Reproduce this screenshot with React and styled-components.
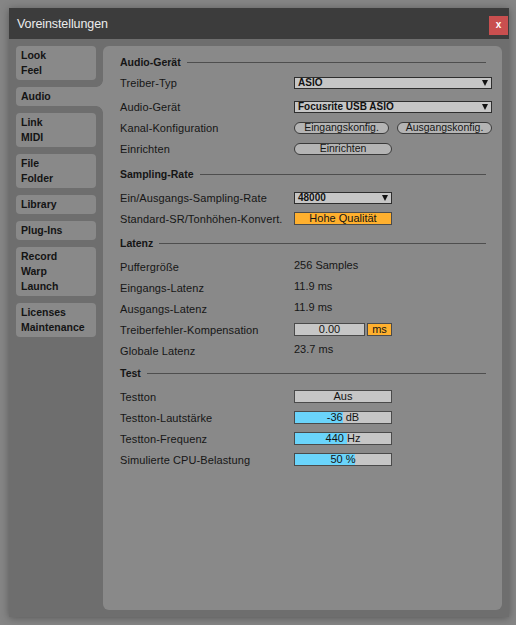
import React from "react";
import styled, { createGlobalStyle } from "styled-components";

const Global = createGlobalStyle`
  html, body { margin: 0; padding: 0; }
  body {
    background: #858585;
    font-family: "Liberation Sans", Arial, sans-serif;
    width: 516px;
    height: 625px;
    overflow: hidden;
  }
`;

const Page = styled.div`
  padding: 8px 0 0 9px;
`;

const Window = styled.div`
  width: 500px;
  height: 609px;
  background: #6e6e6e;
  display: flex;
  flex-direction: column;
  box-shadow: 0 1px 8px rgba(0, 0, 0, 0.35);
`;

const TitleBar = styled.div`
  height: 31px;
  flex: none;
  background: #3c3c3c;
  display: flex;
  align-items: center;
  padding-left: 8px;
  box-sizing: border-box;
`;

const Title = styled.div`
  flex: 1;
  color: #ececec;
  font-size: 12.5px;
  letter-spacing: -0.1px;
`;

const Close = styled.div`
  align-self: flex-start;
  margin-top: 8px;
  margin-right: 1px;
  width: 19px;
  height: 19px;
  background: #c94f4f;
  color: #fff;
  font-size: 10px;
  font-weight: 700;
  display: flex;
  align-items: center;
  justify-content: center;
  line-height: 1;
  padding-bottom: 1px;
  box-sizing: border-box;
`;

const Body = styled.div`
  flex: 1;
  display: flex;
  gap: 7px;
  padding: 7px 7px 7px 7px;
  min-height: 0;
`;

const Sidebar = styled.div`
  width: 80px;
  flex: none;
  display: flex;
  flex-direction: column;
  gap: 7px;
`;

const Tab = styled.div`
  position: relative;
  z-index: ${(p) => (p.$active ? 1 : 0)};
  width: ${(p) => (p.$active ? "88px" : "80px")};
  box-sizing: border-box;
  background: #898989;
  border-radius: ${(p) => (p.$active ? "4px 0 0 4px" : "4px")};
  padding: 2px 0 2px 5px;
  font-size: 10.5px;
  font-weight: 700;
  line-height: 15px;
  color: #141414;

  ${(p) =>
    p.$active &&
    `
    &::before, &::after {
      content: "";
      position: absolute;
      right: 1px;
      width: 7px;
      height: 7px;
    }
    &::before {
      top: -7px;
      background: radial-gradient(circle at 0 0, transparent 6.5px, #898989 7.2px);
    }
    &::after {
      top: 100%;
      background: radial-gradient(circle at 0 100%, transparent 6.5px, #898989 7.2px);
    }
  `}
`;

const Panel = styled.div`
  flex: 1;
  background: #898989;
  border-radius: 6px;
  padding: 8px 10px 0 17px;
  display: flex;
  flex-direction: column;
`;

const Header = styled.div`
  display: flex;
  align-items: center;
  gap: 6px;
  height: 16px;
  margin-right: 6px;
  margin-top: ${(p) => p.$top || 0}px;
  margin-bottom: ${(p) => p.$bottom || 0}px;
  font-size: 10.5px;
  font-weight: 700;
  color: #151515;

  &::after {
    content: "";
    flex: 1;
    height: 1px;
    background: #4e4e4e;
  }
`;

const Row = styled.div`
  display: grid;
  grid-template-columns: 174px 1fr;
  align-items: center;
  height: ${(p) => p.$h || 21}px;
  margin-bottom: ${(p) => p.$mb || 0}px;
`;

const Label = styled.div`
  font-size: 11px;
  letter-spacing: 0.1px;
  color: #161616;
  white-space: nowrap;
`;

const Value = styled.div`
  font-size: 11px;
  color: #161616;
  margin-top: -3px;
`;

const Controls = styled.div`
  display: flex;
  align-items: center;
  gap: ${(p) => p.$gap || 0}px;
`;

const Select = styled.div`
  width: ${(p) => p.$w}px;
  height: 12px;
  box-sizing: border-box;
  border: 1px solid #2e2e2e;
  background: #c6c6c6;
  display: flex;
  align-items: center;
  justify-content: space-between;
  padding: 0 3px 0 3px;
  font-size: 10px;
  font-weight: 700;
  color: #111;
  line-height: 1;
`;

const Arrow = styled.span`
  width: 0;
  height: 0;
  border-left: 3.5px solid transparent;
  border-right: 3.5px solid transparent;
  border-top: 6px solid #111;
`;

const Pill = styled.div`
  width: ${(p) => p.$w}px;
  height: 12px;
  box-sizing: border-box;
  border: 1px solid #3a3a3a;
  border-radius: 6px;
  background: #b4b4b4;
  display: flex;
  align-items: center;
  justify-content: center;
  font-size: 10.5px;
  color: #151515;
  line-height: 1;
`;

const Box = styled.div`
  position: relative;
  overflow: hidden;
  width: ${(p) => p.$w || 98}px;
  height: 13px;
  box-sizing: border-box;
  border: 1px solid #4a4a4a;
  background: ${(p) => (p.$orange ? "#ffb02e" : "#c6c6c6")};
  display: flex;
  align-items: center;
  justify-content: center;
  font-size: 11px;
  color: #141414;
  line-height: 1;
`;

const Fill = styled.div`
  position: absolute;
  left: 0;
  top: 0;
  bottom: 0;
  background: #6ad4fb;
`;

const BoxText = styled.span`
  position: relative;
`;

function SliderBox({ value, fill }) {
  return (
    <Box>
      <Fill style={{ width: `${fill}%` }} />
      <BoxText>{value}</BoxText>
    </Box>
  );
}

const tabs = [
  ["Look", "Feel"],
  ["Audio"],
  ["Link", "MIDI"],
  ["File", "Folder"],
  ["Library"],
  ["Plug-Ins"],
  ["Record", "Warp", "Launch"],
  ["Licenses", "Maintenance"],
];

export default function App() {
  return (
    <>
      <Global />
      <Page>
        <Window>
          <TitleBar>
            <Title>Voreinstellungen</Title>
            <Close>x</Close>
          </TitleBar>
          <Body>
            <Sidebar>
              {tabs.map((lines) => (
                <Tab key={lines[0]} $active={lines[0] === "Audio"}>
                  {lines.map((l) => (
                    <div key={l}>{l}</div>
                  ))}
                </Tab>
              ))}
            </Sidebar>
            <Panel>
              <Header $bottom={2}>Audio-Gerät</Header>
              <Row $mb={3}>
                <Label>Treiber-Typ</Label>
                <Select $w={198}>
                  <span>ASIO</span>
                  <Arrow />
                </Select>
              </Row>
              <Row>
                <Label>Audio-Gerät</Label>
                <Select $w={198}>
                  <span>Focusrite USB ASIO</span>
                  <Arrow />
                </Select>
              </Row>
              <Row>
                <Label>Kanal-Konfiguration</Label>
                <Controls $gap={8}>
                  <Pill $w={95}>Eingangskonfig.</Pill>
                  <Pill $w={95}>Ausgangskonfig.</Pill>
                </Controls>
              </Row>
              <Row>
                <Label>Einrichten</Label>
                <Pill $w={98}>Einrichten</Pill>
              </Row>

              <Header $top={7} $bottom={5}>Sampling-Rate</Header>
              <Row>
                <Label>Ein/Ausgangs-Sampling-Rate</Label>
                <Select $w={98}>
                  <span>48000</span>
                  <Arrow />
                </Select>
              </Row>
              <Row>
                <Label>Standard-SR/Tonhöhen-Konvert.</Label>
                <Box $orange>Hohe Qualität</Box>
              </Row>

              <Header $top={6} $bottom={5}>Latenz</Header>
              <Row>
                <Label>Puffergröße</Label>
                <Value>256 Samples</Value>
              </Row>
              <Row>
                <Label>Eingangs-Latenz</Label>
                <Value>11.9 ms</Value>
              </Row>
              <Row>
                <Label>Ausgangs-Latenz</Label>
                <Value>11.9 ms</Value>
              </Row>
              <Row>
                <Label>Treiberfehler-Kompensation</Label>
                <Controls $gap={2}>
                  <Box $w={71}>0.00</Box>
                  <Box $w={25} $orange>ms</Box>
                </Controls>
              </Row>
              <Row>
                <Label>Globale Latenz</Label>
                <Value>23.7 ms</Value>
              </Row>

              <Header $top={4} $bottom={5}>Test</Header>
              <Row>
                <Label>Testton</Label>
                <Box>Aus</Box>
              </Row>
              <Row>
                <Label>Testton-Lautstärke</Label>
                <SliderBox value="-36 dB" fill={50} />
              </Row>
              <Row>
                <Label>Testton-Frequenz</Label>
                <SliderBox value="440 Hz" fill={54} />
              </Row>
              <Row>
                <Label>Simulierte CPU-Belastung</Label>
                <SliderBox value="50 %" fill={62} />
              </Row>
            </Panel>
          </Body>
        </Window>
      </Page>
    </>
  );
}
